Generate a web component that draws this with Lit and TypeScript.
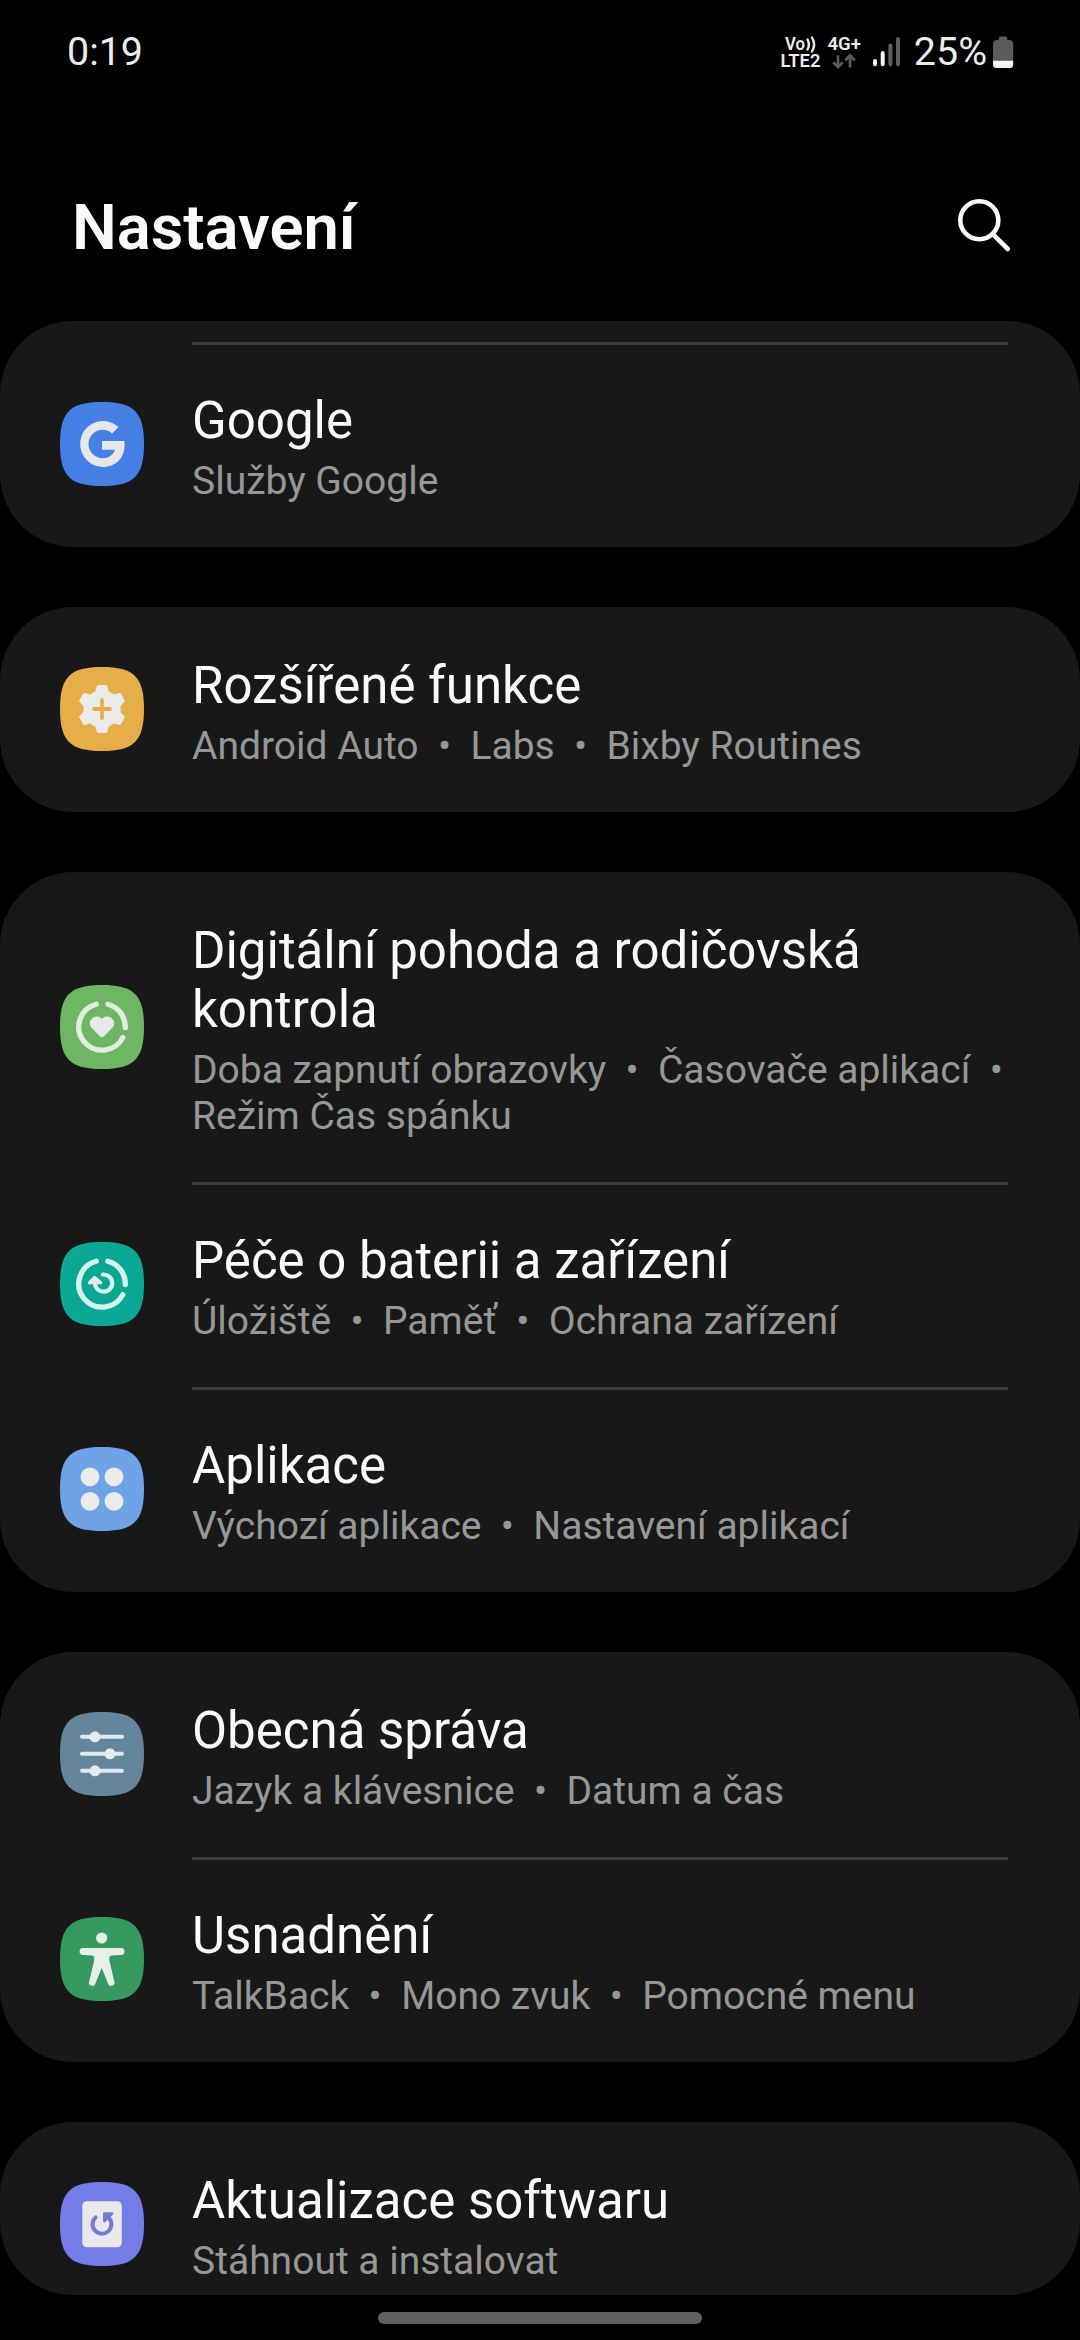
import { LitElement, html, css, svg } from "lit";
import { customElement, property } from "lit/decorators.js";

interface Entry {
  icon: string;
  title: string;
  sub: string;
}

const DOT = "\u00a0 •  ";

const GROUPS: Entry[][] = [
  [{ icon: "google", title: "Google", sub: "Služby Google" }],
  [{ icon: "advanced", title: "Rozšířené funkce", sub: ["Android Auto", "Labs", "Bixby Routines"].join(DOT) }],
  [
    {
      icon: "wellbeing",
      title: "Digitální pohoda a rodičovská kontrola",
      sub: ["Doba zapnutí obrazovky", "Časovače aplikací", "Režim Čas spánku"].join(DOT),
    },
    { icon: "care", title: "Péče o baterii a zařízení", sub: ["Úložiště", "Paměť", "Ochrana zařízení"].join(DOT) },
    { icon: "apps", title: "Aplikace", sub: ["Výchozí aplikace", "Nastavení aplikací"].join(DOT) },
  ],
  [
    { icon: "general", title: "Obecná správa", sub: ["Jazyk a klávesnice", "Datum a čas"].join(DOT) },
    { icon: "access", title: "Usnadnění", sub: ["TalkBack", "Mono zvuk", "Pomocné menu"].join(DOT) },
  ],
  [{ icon: "update", title: "Aktualizace softwaru", sub: "Stáhnout a instalovat" }],
];

const ring = (color: string) => svg`
  <g fill="none" stroke=${color} stroke-width="5.3" stroke-linecap="round">
    <path d="M47.9 19.3A23.3 23.3 0 0 1 65.3 42.7" />
    <path d="M62.8 52.6A23.3 23.3 0 1 1 36.3 19.3" />
  </g>`;

const ICONS: Record<string, { bg: string; art: unknown }> = {
  google: {
    bg: "#4680e6",
    art: svg`<path fill="#e6e7ea" d="M64.2 39H42V47.7H55C53.2 52.7 48.6 56.2 42.7 56.2A14.2 14.2 0 0 1 42.7 27.8C46.3 27.8 49.5 29.2 52 31.4L58.5 24.9A23 23 0 1 0 42.7 65C55.6 65 64.6 56 64.6 43C64.6 41.5 64.5 40.2 64.2 39Z" />`,
  },
  advanced: {
    bg: "#e6ae49",
    art: svg`
      <g fill="#ebebeb">
        <circle cx="42" cy="42" r="18.6" />
        ${[0, 60, 120, 180, 240, 300].map(
          (a) => svg`<path transform="rotate(${a} 42 42)" d="M38.3 18H45.7Q46.9 18 47.2 19.1L48.6 24.2Q49.2 25.6 51 26.2V32H33V26.2Q34.8 25.6 35.4 24.2L36.8 19.1Q37.1 18 38.3 18Z" />`,
        )}
      </g>
      <path d="M42 33V51M34 42H50" stroke="#e6ae49" stroke-width="3.8" stroke-linecap="round" />`,
  },
  wellbeing: {
    bg: "#6eb663",
    art: svg`${ring("#dfeedd")}
      <path fill="#e8e8ea" d="M42 34C39.8 31.2 36.2 30.9 33.3 32.5C29.6 34.6 28.6 39.3 31.4 42.6L39.8 51.2Q42 53.2 44.2 51.2L52.6 42.6C55.4 39.3 54.4 34.6 50.7 32.5C47.8 30.9 44.2 31.2 42 34Z" />`,
  },
  care: {
    bg: "#0aa893",
    art: svg`${ring("#d3f3f1")}
      <path d="M43 32.5A8.6 8.6 0 1 1 35 41.5" fill="none" stroke="#d3f3f1" stroke-width="4.2" stroke-linecap="round" />
      <path d="M34.6 35.4L40.8 40.7H29.2Z" fill="#e2ebe6" stroke="#e2ebe6" stroke-width="3" stroke-linejoin="round" />`,
  },
  apps: {
    bg: "#6ea3e8",
    art: svg`<g fill="#ebebe9">
      <circle cx="30" cy="29.8" r="9.4" /><circle cx="54" cy="29.8" r="9.4" />
      <circle cx="30" cy="54.3" r="9.4" /><circle cx="54" cy="54.3" r="9.4" />
    </g>`,
  },
  general: {
    bg: "#64869a",
    art: svg`
      <path d="M22 24.8H62M22 41.8H62M22 58.8H62" stroke="#dfe9f0" stroke-width="4" stroke-linecap="round" />
      <g fill="#e6ebee"><circle cx="35" cy="24.8" r="5.5" /><circle cx="50" cy="41.8" r="5.5" /><circle cx="35" cy="58.8" r="5.5" /></g>`,
  },
  access: {
    bg: "#37995f",
    art: svg`<g fill="#e6f0e8">
      <circle cx="41.7" cy="21" r="5.6" />
      <path d="M23 31H61A3.3 3.3 0 0 1 61 37.9L51.5 38.4Q49.2 38.7 49.2 41Q49.2 43.5 50 46L54.2 64.2A3.2 3.2 0 0 1 48.2 67L41.7 51L35.2 67A3.2 3.2 0 0 1 29.2 64.2L33.6 46Q34.3 43.5 34.3 41Q34.3 38.7 32 38.4L23 37.9A3.3 3.3 0 0 1 23 31Z" />
    </g>`,
  },
  update: {
    bg: "#757de6",
    art: svg`
      <rect x="22.3" y="19.2" width="39.5" height="46" rx="4.5" fill="#e9e9ec" />
      <path d="M35.6 35.4A9.4 9.4 0 1 0 48.8 35.8" fill="none" stroke="#757cd4" stroke-width="4" stroke-linecap="round" />
      <path d="M44.3 31.6H52.2L44.3 39.2Z" fill="#757cd4" stroke="#757cd4" stroke-width="2.6" stroke-linejoin="round" />`,
  },
};

@customElement("settings-row")
export class SettingsRow extends LitElement {
  @property({ attribute: false }) entry!: Entry;
  @property({ type: Boolean }) divided = false;

  static styles = css`
    :host {
      display: block;
    }
    .row {
      display: grid;
      grid-template-columns: 192px 816px;
      align-items: center;
    }
    .line {
      height: 3px;
      margin: 0 72px -3px 192px;
      background: #3b3b3c;
    }
    .icon {
      display: block;
      width: 84px;
      height: 84px;
      margin: 0 0 1px 60px;
    }
    .text {
      padding: 49px 0 43px;
    }
    .title {
      font-size: 51px;
      line-height: 59px;
      color: #fafafa;
    }
    .sub {
      margin-top: 8px;
      font-size: 39px;
      line-height: 46px;
      color: #979797;
      white-space: pre-wrap;
    }
  `;

  render() {
    const { bg, art } = ICONS[this.entry.icon];
    return html`
      ${this.divided ? html`<div class="line"></div>` : null}
      <div class="row">
        <svg class="icon" viewBox="0 0 84 84">
          <path fill=${bg} d="M0 42C0 10 10 0 42 0S84 10 84 42 74 84 42 84 0 74 0 42Z" />
          ${art}
        </svg>
        <div class="text">
          <div class="title">${this.entry.title}</div>
          <div class="sub">${this.entry.sub}</div>
        </div>
      </div>
    `;
  }
}

@customElement("app-root")
export class AppRoot extends LitElement {
  static styles = css`
    :host {
      display: flex;
      flex-direction: column;
      width: 1080px;
      height: 2340px;
      overflow: hidden;
      background: #000;
      color: #fafafa;
      font-family: Roboto, "Noto Sans", sans-serif;
    }
    .status {
      display: flex;
      align-items: center;
      height: 102px;
      padding: 0 66px 0 67px;
      font-size: 39.4px;
      line-height: 46px;
      color: #ececec;
    }
    .status span {
      padding-top: 2px;
    }
    .clock {
      flex: 1;
    }
    .radio {
      display: block;
      width: 124px;
      height: 40px;
      margin-right: 11px;
    }
    .radio text {
      font-weight: 600;
      fill: #ececec;
    }
    .battery {
      display: block;
      width: 21px;
      height: 40px;
      margin-left: 6px;
    }
    .radio,
    .battery {
      margin-top: 2px;
    }
    .head {
      display: flex;
      align-items: center;
      justify-content: space-between;
      height: 219px;
      padding: 0 68px 0 72px;
      box-sizing: border-box;
    }
    .head h1 {
      margin: 31px 0 0;
      font-size: 63.3px;
      line-height: 74px;
      font-weight: 600;
    }
    .search {
      display: block;
      width: 56px;
      height: 56px;
      margin-top: 31px;
    }
    .list {
      display: flex;
      flex-direction: column;
      gap: 60px;
      height: 1974px;
    }
    .card {
      flex: none;
      border-radius: 73px;
      background: #181818;
      overflow: hidden;
    }
    .card.first {
      padding-top: 21px;
    }
    .card.last {
      flex: 1 1 0;
      min-height: 0;
    }
    .handle {
      width: 324px;
      height: 12px;
      margin: 17px auto 0;
      border-radius: 6px;
      background: #605e60;
    }
  `;

  render() {
    const last = GROUPS.length - 1;
    return html`
      <div class="status">
        <span class="clock">0:19</span>
        <svg class="radio" viewBox="778 32 124 40">
          <text x="784" y="50" font-size="17.5" textLength="20" lengthAdjust="spacingAndGlyphs">Vo</text>
          <path d="M806.5 39.5Q809.3 44.5 806.5 49.5M811 37.5Q815.2 44.5 811 51.5" fill="none" stroke="#ececec" stroke-width="2.4" stroke-linecap="round" />
          <text x="779.5" y="67.3" font-size="18" textLength="40" lengthAdjust="spacingAndGlyphs">LTE2</text>
          <text x="826.5" y="50" font-size="17.5" textLength="33.5" lengthAdjust="spacingAndGlyphs">4G+</text>
          <path d="M837 55.5V66.5M832.3 62.3L837 67L841.7 62.3M849 67.5V56M844.3 60.2L849 55.5L853.7 60.2" fill="none" stroke="#5c5c5c" stroke-width="2.7" />
          <g stroke-width="4" stroke-linecap="round">
            <path d="M874 61V64.3M881.7 53V64.3" stroke="#f4f4f4" />
            <path d="M889.4 45.5V64.3M897 39V64.3" stroke="#606060" />
          </g>
        </svg>
        <span>25%</span>
        <svg class="battery" viewBox="993 32 21 40">
          <path d="M1000.5 36.5H1005.5Q1007.3 36.5 1007.3 38.5V40H1009.5Q1013.2 40 1013.2 44V61H993V44Q993 40 996.7 40H998.7V38.5Q998.7 36.5 1000.5 36.5Z" fill="#5b5b5b" />
          <path d="M993 60.8H1013.2V64.5Q1013.2 68 1009.7 68H996.5Q993 68 993 64.5Z" fill="#f4f4f4" />
        </svg>
      </div>
      <div class="head">
        <h1>Nastavení</h1>
        <svg class="search" viewBox="0 0 56 56">
          <g fill="none" stroke="#fafafa" stroke-width="4.6" stroke-linecap="round">
            <circle cx="23.3" cy="21.3" r="19" />
            <path d="M37 35.3L51.8 50" />
          </g>
        </svg>
      </div>
      <div class="list">
        ${GROUPS.map(
          (rows, g) => html`<div class="card ${g === 0 ? "first" : g === last ? "last" : ""}">
            ${rows.map(
              (entry, i) => html`<settings-row .entry=${entry} ?divided=${g === 0 || i > 0}></settings-row>`,
            )}
          </div>`,
        )}
      </div>
      <div class="handle"></div>
    `;
  }
}
